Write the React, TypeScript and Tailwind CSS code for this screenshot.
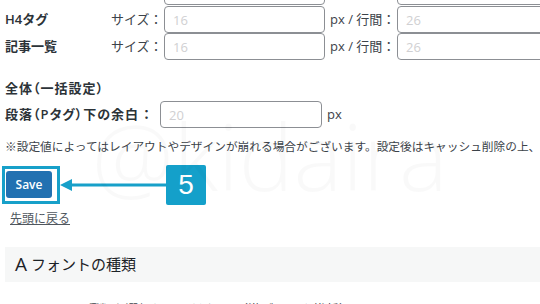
const Field = ({ value, width = "w-[161px]" }: { value: string; width?: string }) => (
  <input
    readOnly
    placeholder={value}
    className={`${width} h-[27px] shrink-0 rounded-[4px] border border-[#8c8f94] bg-white px-[8px] text-[13px] text-[#2c3338] placeholder:text-[#d0d0d2] outline-none`}
  />
);

const SizeRow = ({ label, size, line, className = "" }: { label: string; size: string; line: string; className?: string }) => (
  <div className={`flex h-[27px] items-center text-[13px] ${className}`}>
    <span className="w-[106px] shrink-0 font-semibold text-[#2c3338]">{label}</span>
    <span className="w-[53px] shrink-0 text-[#3c434a]">サイズ：</span>
    <Field value={size} />
    <span className="w-[72px] shrink-0 pl-[5px] text-[#3c434a]">px / 行間：</span>
    <Field value={line} />
  </div>
);

const App = () => {
  return (
    <div className="relative h-[304px] w-[540px] overflow-hidden bg-white pl-[5px] font-['Open_Sans','Noto_Sans_CJK_JP',sans-serif] text-[#2c3338]">
      <SizeRow label="H3タグ" size="18" line="28" className="-mt-[22px]" />
      <SizeRow label="H4タグ" size="16" line="26" className="mt-px" />
      <SizeRow label="記事一覧" size="16" line="26" />

      <p className="mt-[18px] text-[13px] leading-[20px] font-semibold tracking-[1px] [font-feature-settings:'palt']">
        全体（一括設定）
      </p>
      <div className="mt-[3px] flex h-[27px] items-center text-[13px]">
        <span className="w-[155px] shrink-0 font-semibold tracking-[1px] [font-feature-settings:'palt']">段落（Pタグ）下の余白 ：</span>
        <Field value="20" width="w-[162px]" />
        <span className="ml-[5px] text-[#3c434a]">px</span>
      </div>

      <p className="mt-[9px] whitespace-nowrap text-[11.7px] leading-[18px] text-[#3c434a]">
        ※設定値によってはレイアウトやデザインが崩れる場合がございます。設定後はキャッシュ削除の上、ご確認ください。
      </p>

      <div className="mt-[10px] flex items-center">
        <div className="-ml-[3px] flex h-[38px] w-[58px] items-start border-[3px] border-[#17a0c9] pl-px pt-[2px]">
          <button className="h-[27px] w-[46px] rounded-[3px] bg-[#2271b1] text-[12px] font-semibold text-white">
            Save
          </button>
        </div>
        <svg width="106" height="14" viewBox="0 0 106 14" className="shrink-0">
          <polygon points="0,7 12,1 12,13" fill="#17a0c9" />
          <rect x="11" y="5.5" width="95" height="3" fill="#17a0c9" />
        </svg>
        <div className="flex h-[40px] w-[40px] items-center justify-center rounded-[2px] bg-[#14a0ca] font-['Liberation_Sans',sans-serif] text-[28px] text-white">
          5
        </div>
      </div>

      <a className="ml-[5px] mt-[5px] block w-fit text-[12px] leading-[18px] text-[#50575e] underline">先頭に戻る</a>

      <div className="mt-[19px] flex h-[35px] items-center bg-[#f6f7f7] pl-[10px] text-[15px] text-[#1d2327]">
        <span className="mr-[4px] text-[19px] leading-none">A</span>
        フォントの種類
      </div>

      <p className="mt-[18px] whitespace-nowrap text-[13px] text-[#3c434a]">
        一 フォントの種類を選択してください。（游ゴシック推奨）
      </p>

      <div className="pointer-events-none absolute left-[92px] top-[110px] select-none whitespace-nowrap font-['Open_Sans',sans-serif] text-[92px] font-light leading-none text-black/[0.022]">
        @kidaira
      </div>
    </div>
  );
};

export default App;
